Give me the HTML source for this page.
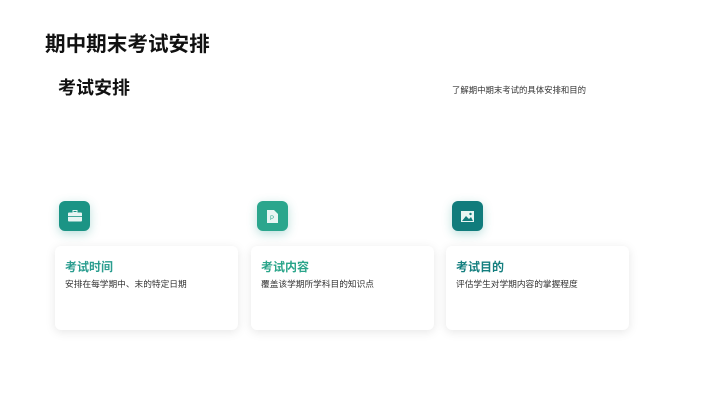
<!DOCTYPE html>
<html><head><meta charset="utf-8"><style>
*{margin:0;padding:0;box-sizing:border-box}
body{width:720px;height:404px;background:#fff;position:relative;overflow:hidden;font-family:"Liberation Sans","Noto Sans CJK SC",sans-serif;color:#222}
.t1{position:absolute;left:45px;top:32px;font-size:20.6px;font-weight:bold;color:#111;line-height:26px}
.t2{position:absolute;left:58px;top:77px;font-size:18px;font-weight:bold;color:#111;line-height:22px}
.t3{position:absolute;left:452px;top:84px;font-size:8.4px;color:#333;line-height:12px}
.ic{position:absolute;top:201px;width:31px;height:30px;border-radius:6px;box-shadow:0 3px 10px rgba(30,150,140,.3);display:flex;align-items:center;justify-content:center}
.card{position:absolute;top:246px;width:183px;height:84px;background:#fff;border-radius:6px;box-shadow:0 2px 10px rgba(0,0,0,.1);padding:13px 0 0 10px}
.card h3{font-size:12px;font-weight:bold;line-height:16px}
.card p{font-size:8.7px;color:#333;margin-top:4px;line-height:11px}
</style></head><body>
<div class="t1">期中期末考试安排</div>
<div class="t2">考试安排</div>
<div class="t3">了解期中期末考试的具体安排和目的</div>

<div class="ic" style="left:59px;background:#1b9485"><svg width="14" height="12" viewBox="0 0 14 12"><rect x="5" y="0.5" width="4" height="2" fill="none" stroke="#e8f5f3" stroke-width="1"/><rect x="0" y="2.5" width="14" height="9" rx="1" fill="#e8f5f3"/><rect x="0" y="6" width="14" height="0.8" fill="#1b9485"/></svg></div>
<div class="ic" style="left:257px;background:#2ba68d"><svg width="11" height="13" viewBox="0 0 11 13"><path d="M0 0H7L11 4V13H0Z" fill="#e8f5f3"/><text x="3" y="10" font-size="6" fill="#2ba68d" font-family="Liberation Sans">P</text></svg></div>
<div class="ic" style="left:452px;background:#117c7c"><svg width="13" height="11" viewBox="0 0 13 11"><rect x="0" y="0" width="13" height="11" fill="#e8f5f3"/><path d="M1 10L5 5L8 8L10 6L12 10Z" fill="#117c7c"/><circle cx="9.5" cy="3" r="1.2" fill="#117c7c"/></svg></div>

<div class="card" style="left:55px"><h3 style="color:#2a9d8f">考试时间</h3><p>安排在每学期中、末的特定日期</p></div>
<div class="card" style="left:251px"><h3 style="color:#2aa58a">考试内容</h3><p>覆盖该学期所学科目的知识点</p></div>
<div class="card" style="left:446px"><h3 style="color:#147f7f">考试目的</h3><p>评估学生对学期内容的掌握程度</p></div>
</body></html>
